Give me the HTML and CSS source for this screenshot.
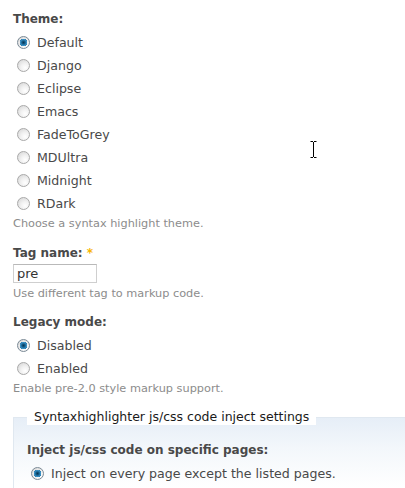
FILE: index.html
```html
<!DOCTYPE html>
<html>
<head>
<meta charset="utf-8">
<link rel="stylesheet" href="styles.css">
</head>
<body>
<div class="page">
  <div class="form-item item-theme">
    <div class="label">Theme:</div>
    <div class="radios">
      <label class="radio"><input type="radio" name="theme" checked> Default</label>
      <label class="radio"><input type="radio" name="theme"> Django</label>
      <label class="radio"><input type="radio" name="theme"> Eclipse</label>
      <label class="radio"><input type="radio" name="theme"> Emacs</label>
      <label class="radio"><input type="radio" name="theme"> FadeToGrey</label>
      <label class="radio"><input type="radio" name="theme"> MDUltra</label>
      <label class="radio"><input type="radio" name="theme"> Midnight</label>
      <label class="radio"><input type="radio" name="theme"> RDark</label>
    </div>
    <div class="desc">Choose a syntax highlight theme.</div>
  </div>

  <div class="form-item item-tag">
    <div class="label label-tag">Tag name: <span class="req">*</span></div>
    <input class="text" type="text" value="pre">
    <div class="desc desc-tight">Use different tag to markup code.</div>
  </div>

  <div class="form-item">
    <div class="label">Legacy mode:</div>
    <div class="radios">
      <label class="radio"><input type="radio" name="legacy" checked> Disabled</label>
      <label class="radio"><input type="radio" name="legacy"> Enabled</label>
    </div>
    <div class="desc desc-up">Enable pre-2.0 style markup support.</div>
  </div>

  <fieldset class="inject">
    <legend>Syntaxhighlighter js/css code inject settings</legend>
    <div class="label">Inject js/css code on specific pages:</div>
    <div class="radios">
      <label class="radio"><input type="radio" name="inject" checked> Inject on every page except the listed pages.</label>
    </div>
  </fieldset>
</div>
<svg class="cursor" width="9" height="17" viewBox="0 0 9 17"><path d="M1.5 0.5h2.5M5 0.5h2.5M4.5 1v15M1.5 16.5h2.5M5 16.5h2.5" stroke="#000" stroke-width="1" fill="none"/></svg>
</body>
</html>
```

FILE: styles.css
```css
html, body {
  margin: 0;
  padding: 0;
  background: #fff;
  overflow: hidden;
}
body {
  font-family: "DejaVu Sans", Verdana, sans-serif;
  font-size: 12.6px;
  color: #494949;
  position: relative;
  width: 405px;
  height: 488px;
}
.page {
  padding: 9px 0 0 13px;
}
.form-item {
  margin-bottom: 12px;
}
.item-theme {
  margin-bottom: 11px;
}
.item-tag {
  margin-bottom: 10px;
}
.label {
  font-size: 12px;
  font-weight: bold;
  line-height: 20px;
  margin-bottom: 2px;
  color: #494949;
}
.label-tag {
  margin-bottom: 1px;
}
.req {
  color: #f7b500;
}
.radios {
  display: flex;
  flex-direction: column;
}
.radio {
  display: flex;
  align-items: center;
  height: 23px;
  line-height: 23px;
  white-space: nowrap;
}
.radio input {
  -webkit-appearance: none;
  appearance: none;
  width: 13px;
  height: 13px;
  margin: 0 7px 0 4px;
  border-radius: 50%;
  border: 1px solid #a9a9a9;
  background: radial-gradient(circle at 65% 70%, #ffffff 0%, #f1f1f1 40%, #d2d2d2 100%);
  box-sizing: border-box;
  flex: none;
}
.radio input:checked {
  border-color: #7b8a96;
  background:
    radial-gradient(circle at 50% 50%, #0a3550 0, #145a86 1.5px, #3a93c8 3.2px, #2a78a8 3.8px, transparent 4px),
    radial-gradient(circle at 65% 70%, #ffffff 0%, #eeeeee 50%, #cfcfcf 100%);
}
.desc {
  font-size: 11.3px;
  line-height: 16px;
  color: #8c8c8c;
  margin-top: 1px;
}
.desc-tight {
  margin-top: 3px;
}
.desc-up {
  margin-top: 1px;
}
.text {
  display: block;
  box-sizing: border-box;
  width: 84px;
  height: 19px;
  margin: 0;
  padding: 0 3px;
  border: 1px solid #cfcfcf;
  border-top-color: #b9b9b9;
  font-family: "DejaVu Sans", Verdana, sans-serif;
  font-size: 13px;
  color: #333;
  background: #fff;
}
.inject {
  margin: 11px 0 0 0;
  padding: 0 0 10px 13px;
  border: 1px solid #e0e8f0;
  border-right: none;
  background: linear-gradient(#e6eef7 0px, #f3f7fb 30px, #ffffff 70px);
}
.inject legend {
  padding: 0 7px 0 7px;
  font-size: 12.5px;
  line-height: 16px;
  color: #1a1a1a;
  background: #fff;
}
.inject .label {
  margin-top: 15px;
  margin-bottom: 2px;
}
.cursor {
  position: absolute;
  left: 309px;
  top: 141px;
}
```
